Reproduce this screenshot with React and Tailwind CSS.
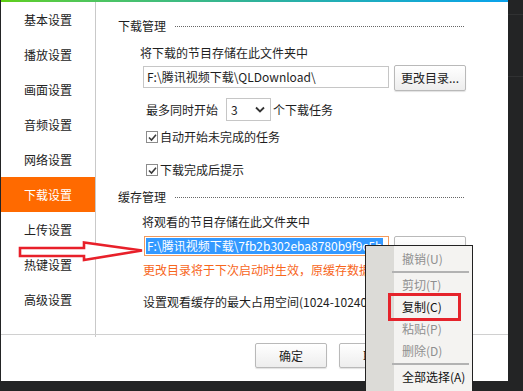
import React from 'react';

const font = { fontFamily: '"Noto Sans CJK SC", "Microsoft YaHei", sans-serif' };

const navItems = ['基本设置', '播放设置', '画面设置', '音频设置', '网络设置', '下载设置', '上传设置', '热键设置', '高级设置'];

const Check = () => (
  <span className="w-[12px] h-[12px] border border-[#8c8c8c] bg-white flex items-center justify-center">
    <svg width="9" height="9" viewBox="0 0 9 9">
      <path d="M1 4.5 L3.5 7 L8 1.8" fill="none" stroke="#3a3a3a" strokeWidth="1.6" />
    </svg>
  </span>
);

const SectionTitle = ({ title, className }) => (
  <div className={`flex items-center h-4 pl-[22px] ${className}`}>
    <span className="leading-4">{title}</span>
    <div className="ml-[9px] w-[289px] border-t border-dotted border-[#666]" />
  </div>
);

const Button = ({ children, className = '' }) => (
  <div className={`w-[72px] h-[25px] border border-[#b9b9b9] rounded-[2px] bg-gradient-to-b from-white to-[#ededed] shadow-[0_1px_1px_rgba(0,0,0,0.12)] flex items-center justify-center text-[12px] text-[#222] ${className}`}>
    {children}
  </div>
);

const menuItems = [
  { label: '撤销(U)', on: false },
  'sep',
  { label: '剪切(T)', on: false },
  { label: '复制(C)', on: true },
  { label: '粘贴(P)', on: false },
  { label: '删除(D)', on: false },
  'sep',
  { label: '全部选择(A)', on: true },
];

const App = () => {
  return (
    <div className="relative w-[523px] h-[391px] bg-[#232425] overflow-hidden flex text-[12px] text-[#1e1e1e]" style={font}>
      <div className="ml-[1px] w-[507px] h-[381px] bg-white flex flex-col">
        <div className="h-[2px] bg-gradient-to-r from-[#5fcf0a] via-[#2fb29a] to-[#0aa2ec]" />
        <div className="h-[332px] flex">
          {/* sidebar */}
          <div className="w-[95px] h-[335px] border-r border-[#c9c9c9] flex flex-col">
            {navItems.map((item, i) => (
              <div
                key={item}
                className={`h-[35px] flex items-center justify-center text-[12px] ${i === 5 ? 'bg-[#ff6a00] text-white' : 'text-[#222]'}`}
              >
                {item}
              </div>
            ))}
          </div>

          {/* content */}
          <div className="flex-1 flex flex-col">
            <SectionTitle title="下载管理" className="mt-[16px]" />
            <div className="mt-[11px] h-4 leading-4 pl-[44px]">将下载的节目存储在此文件夹中</div>
            <div className="mt-[4px] h-[26px] flex items-start pl-[47px]">
              <div className="mt-[1px] w-[246px] h-[22px] border border-[#c6c6c6] flex items-center pl-[3px] text-[12px]">
                F:\腾讯视频下载\QLDownload\
              </div>
              <Button className="ml-[5px] h-[26px]">更改目录...</Button>
            </div>
            <div className="mt-[7px] h-[23px] flex items-center pl-[50px]">
              <span>最多同时开始</span>
              <div className="ml-[8px] w-[45px] h-[23px] border border-[#c6c6c6] flex items-center justify-between pl-[4px] pr-[5px]">
                <span>3</span>
                <svg width="10" height="7" viewBox="0 0 10 7">
                  <path d="M1 1.5 L5 5.5 L9 1.5" fill="none" stroke="#333" strokeWidth="1.8" />
                </svg>
              </div>
              <span className="ml-[2px]">个下载任务</span>
            </div>
            <div className="mt-[8px] h-4 flex items-center pl-[50px] gap-[2px]">
              <Check />
              <span>自动开始未完成的任务</span>
            </div>
            <div className="mt-[17px] h-4 flex items-center pl-[50px] gap-[2px]">
              <Check />
              <span>下载完成后提示</span>
            </div>

            <SectionTitle title="缓存管理" className="mt-[11px]" />
            <div className="mt-[9px] h-4 leading-4 pl-[46px]">将观看的节目存储在此文件夹中</div>
            <div className="mt-[6px] h-[26px] flex items-start pl-[48px]">
              <div className="w-[245px] h-[20px] border border-[#f39a5c] flex items-center pl-[1px]">
                <span className="w-[237px] h-[16px] bg-[#3399ff] text-white leading-4 pl-[1px] overflow-hidden whitespace-nowrap">
                  F:\腾讯视频下载\7fb2b302eba8780b9f9c5b
                </span>
              </div>
              <Button className="ml-[5px] h-[26px] pt-[8px]">更改目录...</Button>
            </div>
            <div className="h-4 leading-4 pl-[47px] text-[#f7661c] whitespace-nowrap overflow-hidden">
              更改目录将于下次启动时生效，原缓存数据将被清除
            </div>
            <div className="mt-[16px] h-4 leading-4 pl-[47px] whitespace-nowrap">
              设置观看缓存的最大占用空间(1024-10240)
            </div>
          </div>
        </div>
        <div className="flex-1 border-t border-[#d0d0d0] flex pl-[254px] pt-[8px] gap-[12px]">
          <Button>确定</Button>
          <Button>取消</Button>
        </div>
      </div>

      {/* right dark strip */}
      <div className="flex-1 flex flex-col">
        <div className="h-[15px] border-b border-[#303132]" />
        <div className="h-[62px] border-b border-[#303132]" />
      </div>

      {/* red arrow annotation */}
      <svg className="absolute left-0 top-[236px]" width="150" height="30" viewBox="0 236 150 30">
        <path
          d="M20 248 L84 248 L84 242.5 L142 250.5 L84 260 L84 256 L20 256 Z"
          fill="white"
          stroke="#e8202a"
          strokeWidth="2.6"
          strokeLinejoin="miter"
        />
      </svg>

      {/* context menu */}
      <div className="absolute left-[365px] top-[245px] w-[108px] h-[150px] border border-[#222] bg-[#f4f3f1] flex">
        <div className="w-[28px] bg-[#dcdbd7]" />
        <div className="flex-1 flex flex-col pt-[2px]">
          {menuItems.map((m, i) =>
            m === 'sep' ? (
              <div key={i} className="h-[4px] flex items-center pr-[3px] -ml-[2px]">
                <div className="w-full h-[2px] bg-[#b2b2b2]" />
              </div>
            ) : (
              <div
                key={i}
                className={`h-[22px] flex items-center pl-[8px] text-[12px] ${m.on ? 'text-[#111]' : 'text-[#8f8f8f]'}`}
              >
                {m.label}
              </div>
            )
          )}
        </div>
      </div>

      {/* red highlight box */}
      <div className="absolute left-[388px] top-[293px] w-[73px] h-[28px] border-[3px] border-[#e5232b]" />
    </div>
  );
};

export default App;
